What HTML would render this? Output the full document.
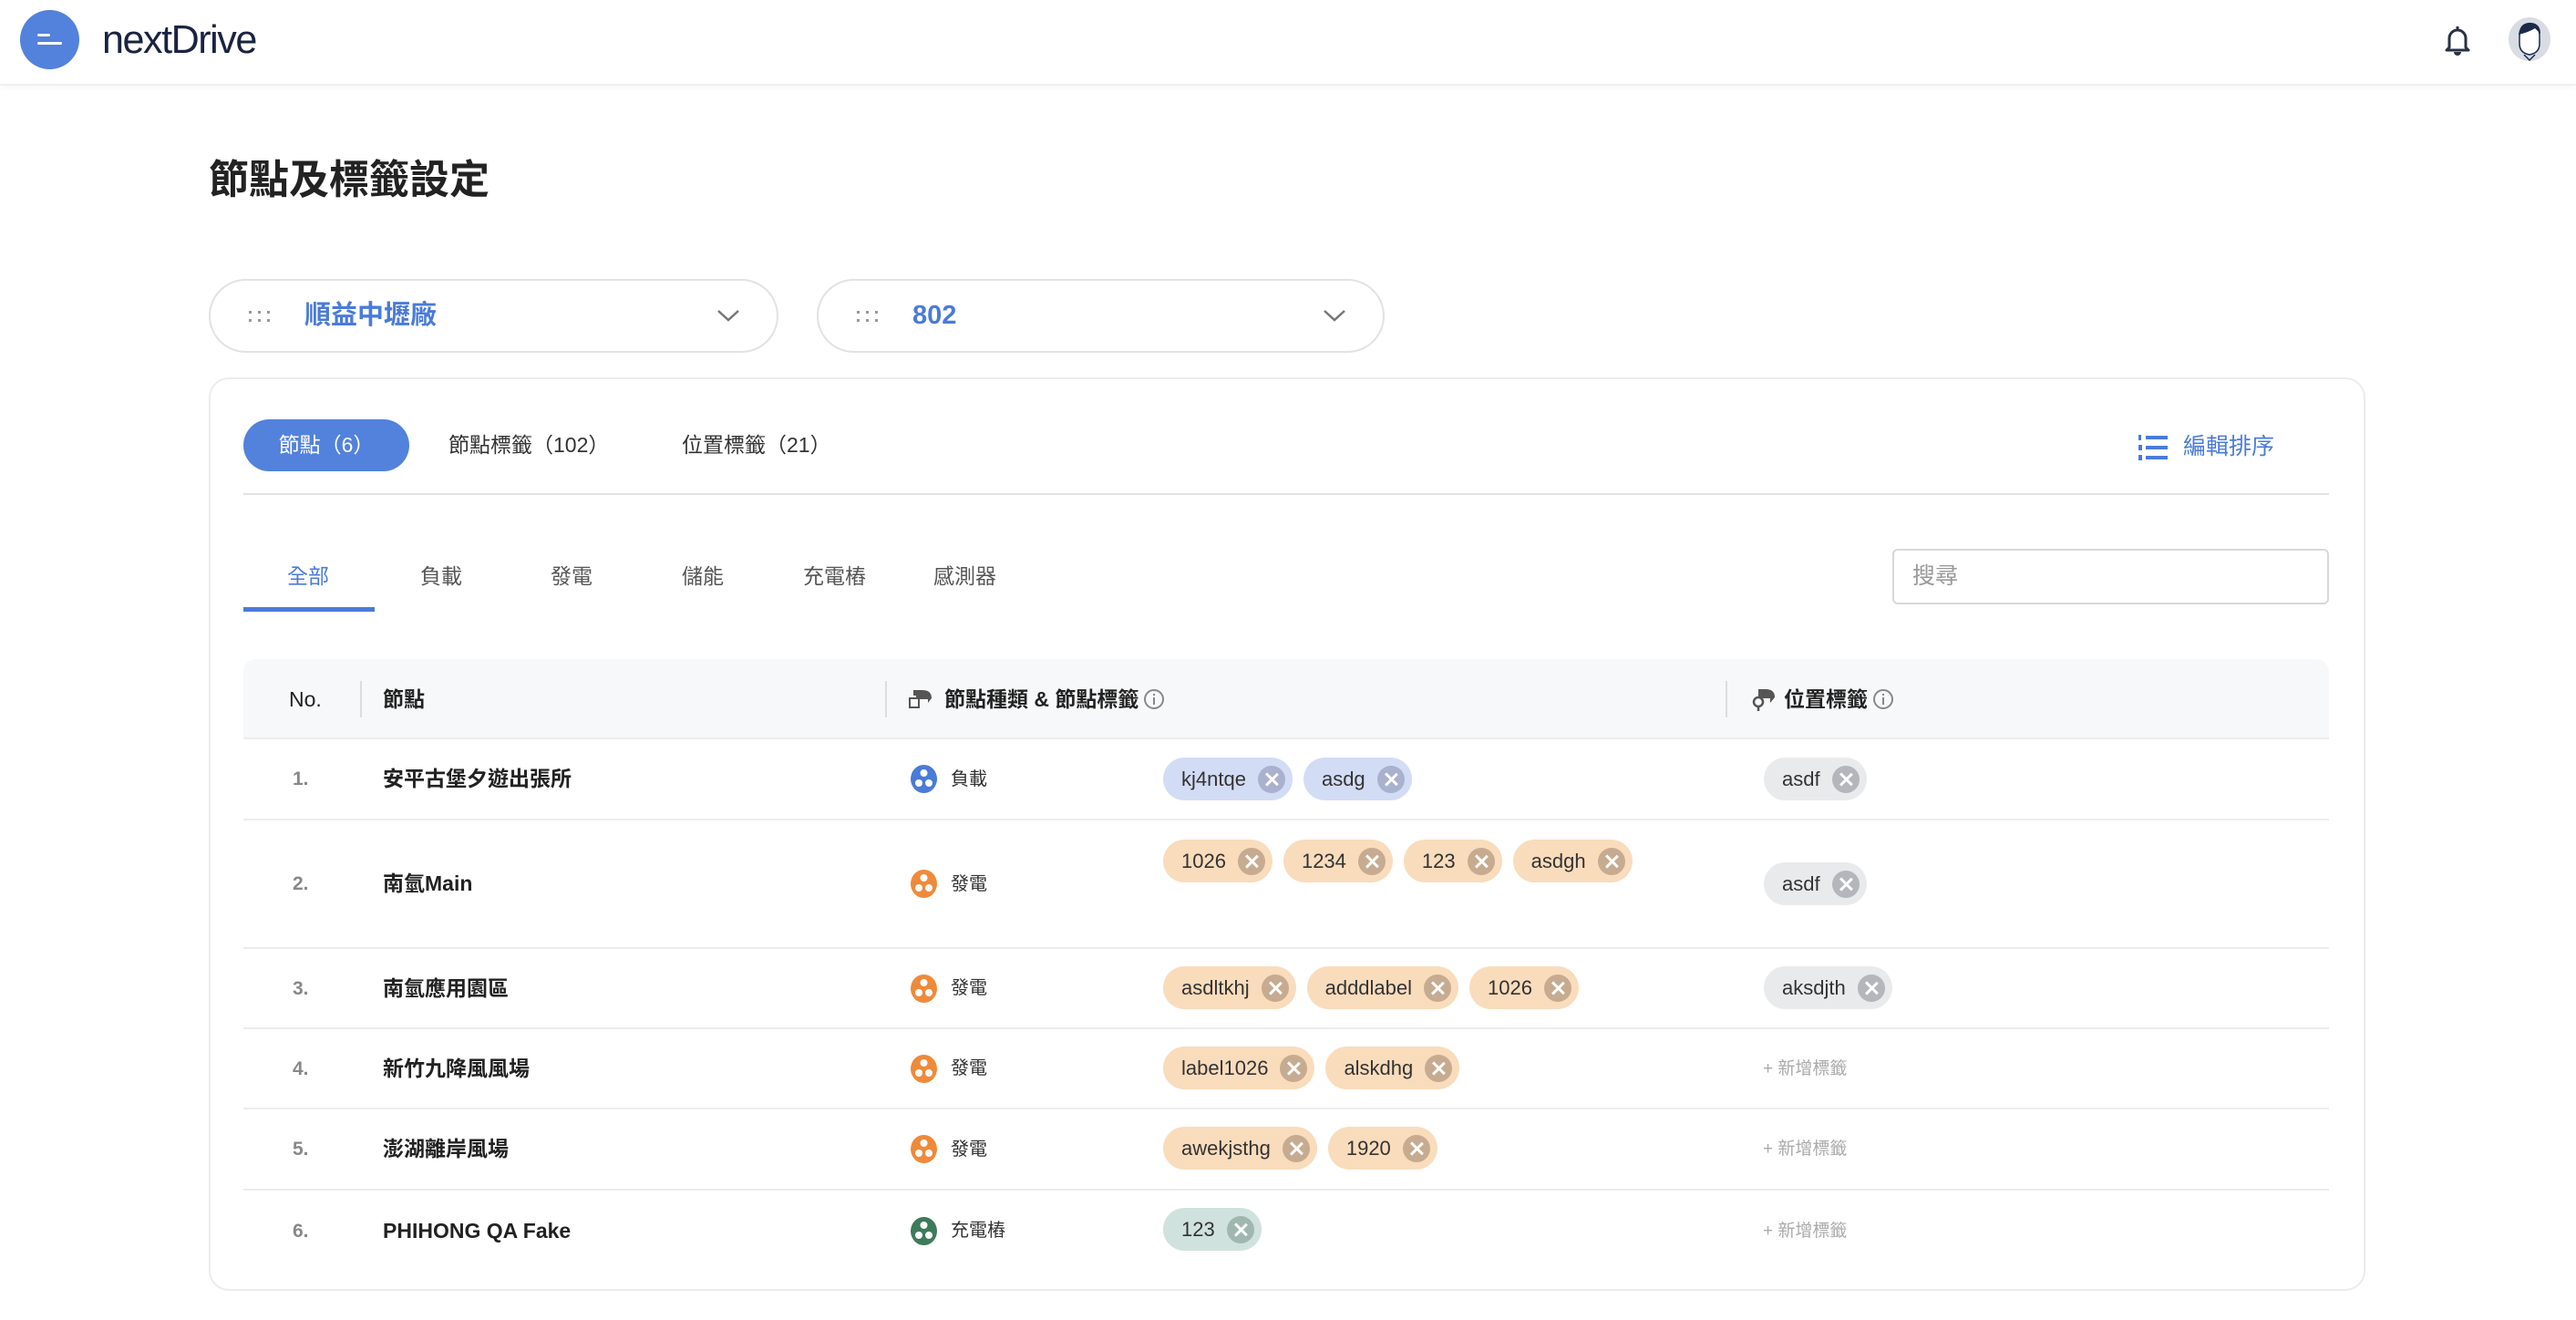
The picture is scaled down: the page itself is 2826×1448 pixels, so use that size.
<!DOCTYPE html>
<html><head><meta charset="utf-8">
<style>
*{box-sizing:border-box;margin:0;padding:0}
body{width:2826px;height:1448px;background:#fff;font-family:"Liberation Sans","Noto Sans CJK TC",sans-serif;color:#222;position:relative;overflow:hidden;line-height:1}
.abs{position:absolute}
.c{display:flex;align-items:center}
.hdr{left:0;top:0;width:2826px;height:94px;border-bottom:2px solid #efefef;box-shadow:0 2px 6px rgba(0,0,0,.04)}
.dd{height:81px;border:2px solid #e2e2e2;border-radius:41px;top:306px}
.dd .t{position:absolute;left:103px;top:0;bottom:0;display:flex;align-items:center;font-size:29px;font-weight:bold;color:#4a7bd8}
.card{left:229px;top:414px;width:2366px;height:1002px;border:2px solid #ececec;border-radius:22px}
.sub{top:616px;height:32px;font-size:23px;color:#555;display:flex;align-items:center}
.th{font-size:23px;font-weight:bold;color:#222;top:723px;height:88px;display:flex;align-items:center}
.row{left:267px;width:2288px;border-bottom:2px solid #ececec}
.row>.no,.row>.nm,.row>.ty,.row>.add{position:absolute;top:0;bottom:0;display:flex;align-items:center}
.no{left:54px;font-size:21px;color:#888;font-weight:bold}
.nm{left:153px;font-size:23px;font-weight:bold;color:#222}
.ty{left:732px;font-size:20px;color:#333}
.ty svg{margin-right:15px}
.tags{position:absolute;left:1009px;display:flex;gap:12px}
.tag{height:47px;border-radius:24px;display:flex;align-items:center;padding:0 8px 0 20px;font-size:22px;color:#333}
.tag i{display:inline-block;width:30px;height:30px;border-radius:50%;margin-left:13px;position:relative}
.tag i:before,.tag i:after{content:"";position:absolute;left:14px;top:6px;width:2.5px;height:18px;background:#fff;transform:rotate(45deg)}
.tag i:after{transform:rotate(-45deg)}
.b{background:#d3dcf5}.b i{background:#a9b1ce}
.o{background:#f9dcbc}.o i{background:#c7ab90}
.g{background:#e9eaec}.g i{background:#b4b6bb}
.gr{background:#cfe2dd}.gr i{background:#a0b7b0}
.add{left:1667px;font-size:19px;color:#aaa}
</style></head><body>
<div class="abs hdr"></div>
<div class="abs" style="left:22px;top:11px;width:65px;height:65px;border-radius:50%;background:#5282dc"></div>
<div class="abs" style="left:41px;top:37px;width:14px;height:3px;background:#fff;border-radius:2px"></div>
<div class="abs" style="left:41px;top:46px;width:27px;height:3px;background:#fff;border-radius:2px"></div>
<div class="abs" style="left:112px;top:22px;font-size:44px;color:#1a2340;letter-spacing:-1.5px;transform:scaleX(0.98);transform-origin:left">nextDrive</div>
<svg class="abs" style="left:2680px;top:26px" width="32" height="36" viewBox="0 0 32 36"><path d="M16 3v3M7 26V16a9 9 0 0 1 18 0v10l3 3H4z" fill="none" stroke="#2a3145" stroke-width="3" stroke-linejoin="round"/><path d="M12 31a4 4 0 0 0 8 0" fill="#2a3145"/></svg>
<svg class="abs" style="left:2751px;top:18px" width="48" height="50" viewBox="0 0 48 50"><ellipse cx="24" cy="25" rx="23" ry="24" fill="#d9dce3"/><path d="M13 22q0-14 11-14t11 14v8q0 10-11 12-11-2-11-12z" fill="#fff" stroke="#1b2a4a" stroke-width="1.5"/><path d="M12 20q2-14 14-13 10 1 10 12l-6-6q-6 4-18 7z" fill="#1b2a4a"/><path d="M18 42l6 6 6-6" fill="none" stroke="#1b2a4a" stroke-width="1.5"/></svg>

<div class="abs" style="left:229px;top:176px;font-size:44px;font-weight:bold;color:#222">節點及標籤設定</div>

<div class="abs dd" style="left:229px;width:625px"><svg class="abs" style="left:42px;top:33px" width="28" height="14"><g fill="#999"><rect x="0" y="0" width="3" height="3"/><rect x="10" y="0" width="3" height="3"/><rect x="20" y="0" width="3" height="3"/><rect x="0" y="9" width="3" height="3"/><rect x="10" y="9" width="3" height="3"/><rect x="20" y="9" width="3" height="3"/></g></svg><div class="t">順益中壢廠</div><svg class="abs" style="left:555px;top:30px" width="26" height="16"><path d="M2 3l11 10 11-10" fill="none" stroke="#777" stroke-width="2.5"/></svg></div>
<div class="abs dd" style="left:896px;width:623px"><svg class="abs" style="left:42px;top:33px" width="28" height="14"><g fill="#999"><rect x="0" y="0" width="3" height="3"/><rect x="10" y="0" width="3" height="3"/><rect x="20" y="0" width="3" height="3"/><rect x="0" y="9" width="3" height="3"/><rect x="10" y="9" width="3" height="3"/><rect x="20" y="9" width="3" height="3"/></g></svg><div class="t">802</div><svg class="abs" style="left:553px;top:30px" width="26" height="16"><path d="M2 3l11 10 11-10" fill="none" stroke="#777" stroke-width="2.5"/></svg></div>

<div class="abs card"></div>
<div class="abs c" style="left:267px;top:460px;width:182px;height:57px;border-radius:29px;background:#5282dc;color:#fff;font-size:23px;justify-content:center">節點（6）</div>
<div class="abs c" style="left:492px;top:460px;height:57px;font-size:23px;color:#333">節點標籤（102）</div>
<div class="abs c" style="left:748px;top:460px;height:57px;font-size:23px;color:#333">位置標籤（21）</div>
<svg class="abs" style="left:2345px;top:476px" width="34" height="30"><g fill="#4a7bd8"><rect x="9" y="2" width="24" height="4"/><rect x="9" y="13" width="24" height="4"/><rect x="9" y="24" width="24" height="4"/><rect x="1" y="1" width="3" height="6"/><rect x="1" y="12" width="4" height="6"/><rect x="1" y="23" width="4" height="6"/></g></svg>
<div class="abs c" style="left:2395px;top:462px;height:57px;font-size:25px;color:#4a7bd8">編輯排序</div>
<div class="abs" style="left:267px;top:541px;width:2288px;height:2px;background:#e3e3e3"></div>

<div class="abs sub" style="left:315px;color:#4a7bd8">全部</div>
<div class="abs sub" style="left:461px">負載</div>
<div class="abs sub" style="left:604px">發電</div>
<div class="abs sub" style="left:748px">儲能</div>
<div class="abs sub" style="left:881px">充電樁</div>
<div class="abs sub" style="left:1024px">感測器</div>
<div class="abs" style="left:267px;top:666px;width:144px;height:5px;background:#4a7bd8"></div>
<div class="abs" style="left:2076px;top:602px;width:479px;height:61px;border:2px solid #d8d8d8;border-radius:6px"></div>
<div class="abs c" style="left:2098px;top:602px;height:61px;font-size:25px;color:#999">搜尋</div>

<div class="abs" style="left:267px;top:723px;width:2288px;height:88px;background:#f7f8fa;border-radius:14px 14px 0 0;border-bottom:2px solid #ececec"></div>
<div class="abs th" style="left:317px;font-weight:normal">No.</div>
<div class="abs" style="left:395px;top:747px;width:2px;height:40px;background:#ddd"></div>
<div class="abs th" style="left:420px">節點</div>
<div class="abs" style="left:971px;top:747px;width:2px;height:40px;background:#ddd"></div>
<svg class="abs" style="left:996px;top:753px" width="28" height="26"><path d="M6 4h10q10 0 10 9l-4 5v-4H9v-4H6z" fill="#555"/><rect x="2" y="13" width="10" height="10" fill="none" stroke="#555" stroke-width="2"/></svg>
<div class="abs th" style="left:1036px">節點種類 &amp; 節點標籤</div>
<svg class="abs" style="left:1254px;top:755px" width="24" height="24"><circle cx="12" cy="12" r="10" fill="none" stroke="#888" stroke-width="2"/><rect x="11" y="10" width="2" height="8" fill="#888"/><rect x="11" y="6" width="2" height="2" fill="#888"/></svg>
<div class="abs" style="left:1893px;top:747px;width:2px;height:40px;background:#ddd"></div>
<svg class="abs" style="left:1921px;top:753px" width="28" height="28"><path d="M8 3h8q10 0 10 9l-5 6v-5H8z" fill="#555"/><circle cx="8" cy="17" r="5" fill="none" stroke="#555" stroke-width="2.5"/><path d="M8 22v5" stroke="#555" stroke-width="2.5"/></svg>
<div class="abs th" style="left:1957px">位置標籤</div>
<svg class="abs" style="left:2054px;top:755px" width="24" height="24"><circle cx="12" cy="12" r="10" fill="none" stroke="#888" stroke-width="2"/><rect x="11" y="10" width="2" height="8" fill="#888"/><rect x="11" y="6" width="2" height="2" fill="#888"/></svg>

<div class="abs row" style="top:811px;height:89px">
 <div class="no">1.</div><div class="nm">安平古堡夕遊出張所</div>
 <div class="ty"><svg width="29" height="31"><ellipse cx="14.5" cy="15.5" rx="14.5" ry="15.5" fill="#4a7bd8"/><circle cx="14.5" cy="9" r="4" fill="#fff"/><circle cx="9" cy="20" r="4" fill="#fff"/><circle cx="20" cy="20" r="4" fill="#fff"/></svg>負載</div>
 <div class="tags" style="top:20px"><div class="tag b">kj4ntqe<i></i></div><div class="tag b">asdg<i></i></div></div>
 <div class="tags" style="left:1668px;top:20px"><div class="tag g">asdf<i></i></div></div>
</div>
<div class="abs row" style="top:900px;height:141px">
 <div class="no">2.</div><div class="nm">南氫Main</div>
 <div class="ty"><svg width="29" height="31"><ellipse cx="14.5" cy="15.5" rx="14.5" ry="15.5" fill="#ef8a3a"/><circle cx="14.5" cy="9" r="4" fill="#fff"/><circle cx="9" cy="20" r="4" fill="#fff"/><circle cx="20" cy="20" r="4" fill="#fff"/></svg>發電</div>
 <div class="tags" style="top:21px"><div class="tag o">1026<i></i></div><div class="tag o">1234<i></i></div><div class="tag o">123<i></i></div><div class="tag o">asdgh<i></i></div></div>
 <div class="tags" style="left:1668px;top:46px"><div class="tag g">asdf<i></i></div></div>
</div>
<div class="abs row" style="top:1041px;height:88px">
 <div class="no">3.</div><div class="nm">南氫應用園區</div>
 <div class="ty"><svg width="29" height="31"><ellipse cx="14.5" cy="15.5" rx="14.5" ry="15.5" fill="#ef8a3a"/><circle cx="14.5" cy="9" r="4" fill="#fff"/><circle cx="9" cy="20" r="4" fill="#fff"/><circle cx="20" cy="20" r="4" fill="#fff"/></svg>發電</div>
 <div class="tags" style="top:19px"><div class="tag o">asdltkhj<i></i></div><div class="tag o">adddlabel<i></i></div><div class="tag o">1026<i></i></div></div>
 <div class="tags" style="left:1668px;top:19px"><div class="tag g">aksdjth<i></i></div></div>
</div>
<div class="abs row" style="top:1129px;height:88px">
 <div class="no">4.</div><div class="nm">新竹九降風風場</div>
 <div class="ty"><svg width="29" height="31"><ellipse cx="14.5" cy="15.5" rx="14.5" ry="15.5" fill="#ef8a3a"/><circle cx="14.5" cy="9" r="4" fill="#fff"/><circle cx="9" cy="20" r="4" fill="#fff"/><circle cx="20" cy="20" r="4" fill="#fff"/></svg>發電</div>
 <div class="tags" style="top:19px"><div class="tag o">label1026<i></i></div><div class="tag o">alskdhg<i></i></div></div>
 <div class="add">+ 新增標籤</div>
</div>
<div class="abs row" style="top:1217px;height:89px">
 <div class="no">5.</div><div class="nm">澎湖離岸風場</div>
 <div class="ty"><svg width="29" height="31"><ellipse cx="14.5" cy="15.5" rx="14.5" ry="15.5" fill="#ef8a3a"/><circle cx="14.5" cy="9" r="4" fill="#fff"/><circle cx="9" cy="20" r="4" fill="#fff"/><circle cx="20" cy="20" r="4" fill="#fff"/></svg>發電</div>
 <div class="tags" style="top:19px"><div class="tag o">awekjsthg<i></i></div><div class="tag o">1920<i></i></div></div>
 <div class="add">+ 新增標籤</div>
</div>
<div class="abs row" style="top:1306px;height:88px;border-bottom:none">
 <div class="no">6.</div><div class="nm">PHIHONG QA Fake</div>
 <div class="ty"><svg width="29" height="31"><ellipse cx="14.5" cy="15.5" rx="14.5" ry="15.5" fill="#3e7a5c"/><circle cx="14.5" cy="9" r="4" fill="#fff"/><circle cx="9" cy="20" r="4" fill="#fff"/><circle cx="20" cy="20" r="4" fill="#fff"/></svg>充電樁</div>
 <div class="tags" style="top:19px"><div class="tag gr">123<i></i></div></div>
 <div class="add">+ 新增標籤</div>
</div>
</body></html>
